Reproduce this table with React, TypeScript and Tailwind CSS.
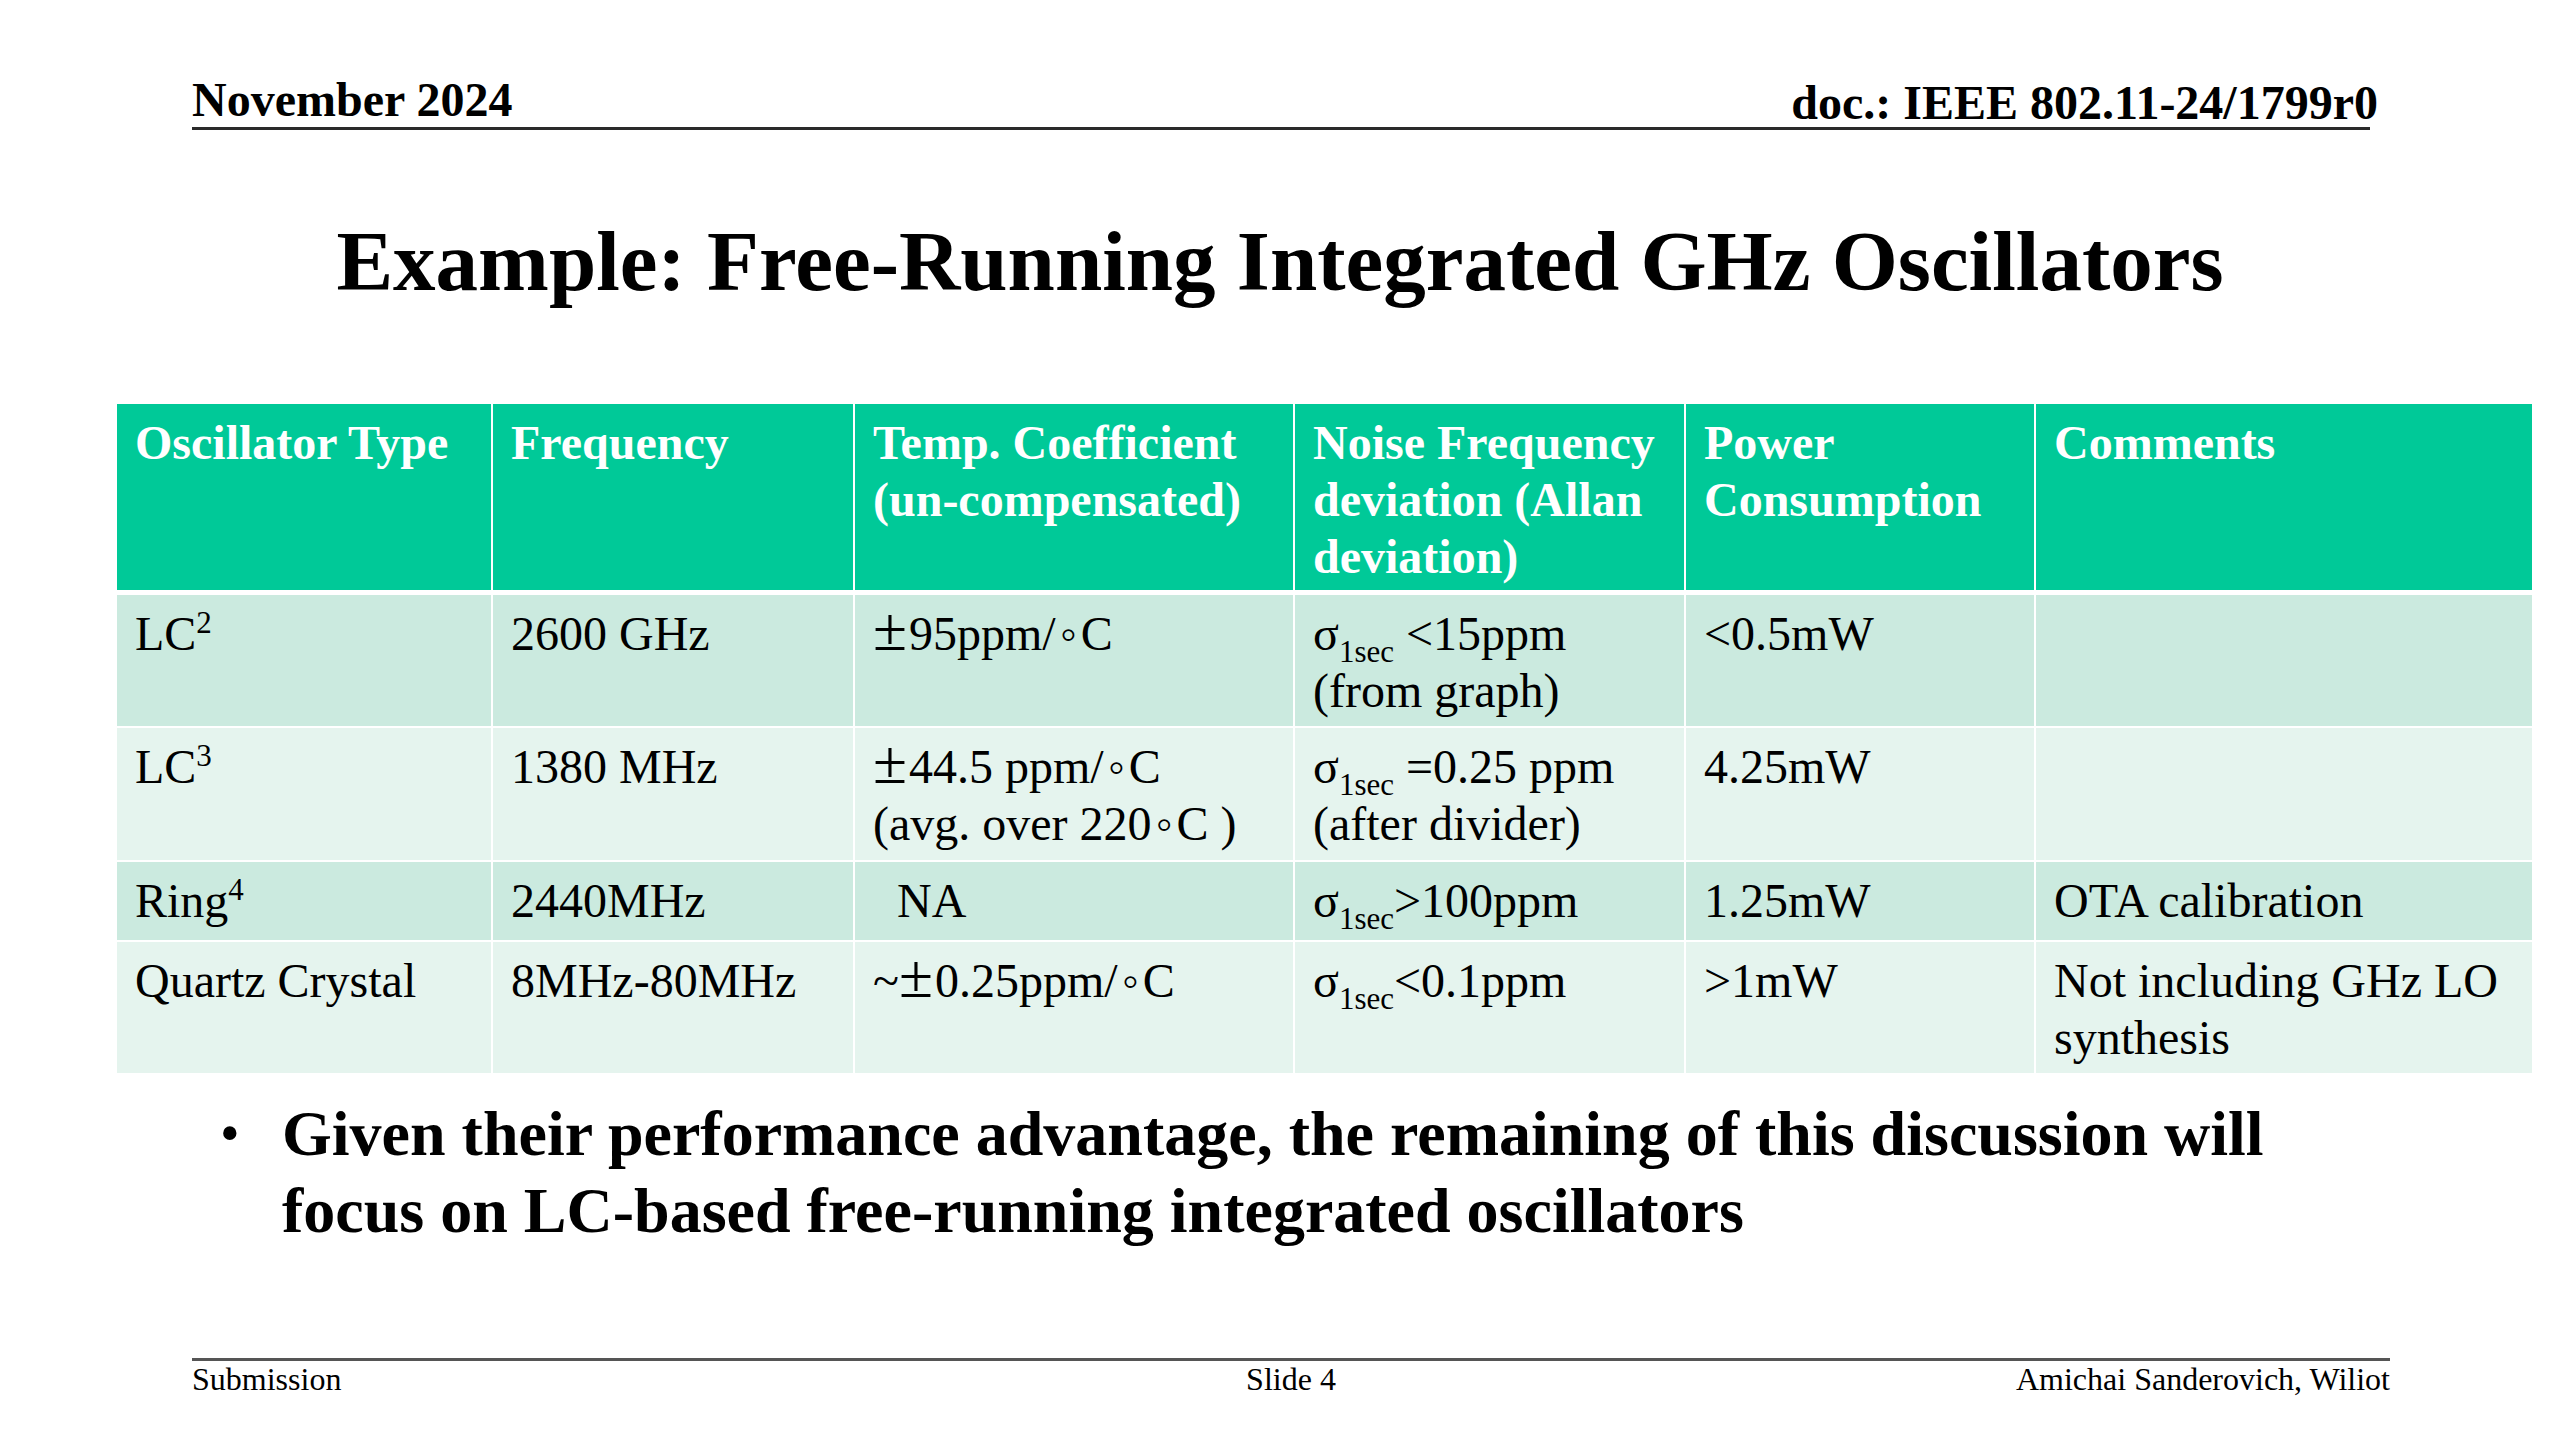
import React from 'react';

const serif = "font-['Liberation_Serif','Times_New_Roman',serif]";

const Sig = ({ rest }: { rest: string }) => (
    <span>
        σ<sub className="text-[31px] -bottom-3">1sec</sub>
        {rest}
    </span>
);

const Sup = ({ base, n }: { base: string; n: string }) => (
    <span>
        {base}
        <sup className="text-[31px] -top-[17px]">{n}</sup>
    </span>
);

// ± and ◦ are set a touch wider, as in the slide's symbol font
const PM = () => <span className="text-[62px] leading-[0] mr-[2px]">±</span>;
const Deg = () => <span className="mx-[4px]">◦</span>;

const cols = 'grid grid-cols-[376px_362px_440px_391px_350px_496px]';

type Cell = React.ReactNode;

const header: Cell[] = [
    'Oscillator Type',
    'Frequency',
    <>Temp. Coefficient<br />(un-compensated)</>,
    <>Noise Frequency<br />deviation (Allan<br />deviation)</>,
    <>Power<br />Consumption</>,
    'Comments',
];

const rows: { cells: Cell[]; h: string; bg: string }[] = [
    {
        h: 'h-[133px]',
        bg: 'bg-[#cbeadf]',
        cells: [
            <Sup base="LC" n="2" />,
            '2600 GHz',
            <><PM />95ppm/<Deg />C</>,
            <><Sig rest=" <15ppm" /><br />(from graph)</>,
            '<0.5mW',
            '',
        ],
    },
    {
        h: 'h-[134px]',
        bg: 'bg-[#e5f4ee]',
        cells: [
            <Sup base="LC" n="3" />,
            '1380 MHz',
            <><PM />44.5 ppm/<Deg />C<br />(avg. over 220<Deg />C )</>,
            <><Sig rest=" =0.25 ppm" /><br />(after divider)</>,
            '4.25mW',
            '',
        ],
    },
    {
        h: 'h-[80px]',
        bg: 'bg-[#cbeadf]',
        cells: [
            <Sup base="Ring" n="4" />,
            '2440MHz',
            <span className="pl-[24px]">NA</span>,
            <Sig rest=">100ppm" />,
            '1.25mW',
            'OTA calibration',
        ],
    },
    {
        h: 'h-[131px]',
        bg: 'bg-[#e5f4ee]',
        cells: [
            'Quartz Crystal',
            '8MHz-80MHz',
            <>~<PM />0.25ppm/<Deg />C</>,
            <Sig rest="<0.1ppm" />,
            '>1mW',
            <>Not including GHz LO<br />synthesis</>,
        ],
    },
];

const App = () => {
    return (
        <div className={`w-[2560px] h-[1440px] bg-white text-black flex flex-col ${serif}`}>
            {/* Running header */}
            <div className="mt-[76px] ml-[192px] w-[2178px] flex items-end justify-between border-b-[3px] border-[#2a2a2a]">
                <span className="text-[48px] leading-[48px] font-bold mb-[3px]">November 2024</span>
                <span className="text-[48px] leading-[48px] font-bold -mr-[8px]">doc.: IEEE 802.11-24/1799r0</span>
            </div>

            {/* Title */}
            <h1 className="mt-[89px] text-center text-[85px] leading-[85px] font-bold">
                Example: Free-Running Integrated GHz Oscillators
            </h1>

            {/* Table */}
            <div className="mt-[100px] ml-[117px] w-[2415px] text-[48px] leading-[57px]">
                <div className={`${cols} h-[191px] bg-[#00c998] border-b-[5px] border-white text-white font-bold`}>
                    {header.map((c, i) => (
                        <div key={i} className={`pl-[18px] pt-[10px] whitespace-nowrap ${i < 5 ? 'border-r-2 border-white' : ''}`}>
                            {c}
                        </div>
                    ))}
                </div>
                {rows.map((r, ri) => (
                    <div key={ri} className={`${cols} ${r.h} ${r.bg} ${ri < rows.length - 1 ? 'border-b-2 border-white' : ''}`}>
                        {r.cells.map((c, i) => (
                            <div key={i} className={`pl-[18px] pt-[10px] whitespace-nowrap ${i < 5 ? 'border-r-2 border-white' : ''}`}>
                                {c}
                            </div>
                        ))}
                    </div>
                ))}
            </div>

            {/* Bullet */}
            <div className="mt-[22px] ml-[220px] flex text-[64px] leading-[77px]">
                <span className="w-[62px] text-[56px]">•</span>
                <p className="font-bold">
                    Given their performance advantage, the remaining of this discussion will
                    <br />
                    focus on LC-based free-running integrated oscillators
                </p>
            </div>

            {/* Footer */}
            <div className="mt-auto mb-[45px] ml-[192px] w-[2198px] border-t-[3px] border-[#555]">
                <div className="grid grid-cols-3 text-[32px] leading-[32px] pt-[2px]">
                    <span>Submission</span>
                    <span className="text-center">Slide 4</span>
                    <span className="text-right">Amichai Sanderovich, Wiliot</span>
                </div>
            </div>
        </div>
    );
};

export default App;
